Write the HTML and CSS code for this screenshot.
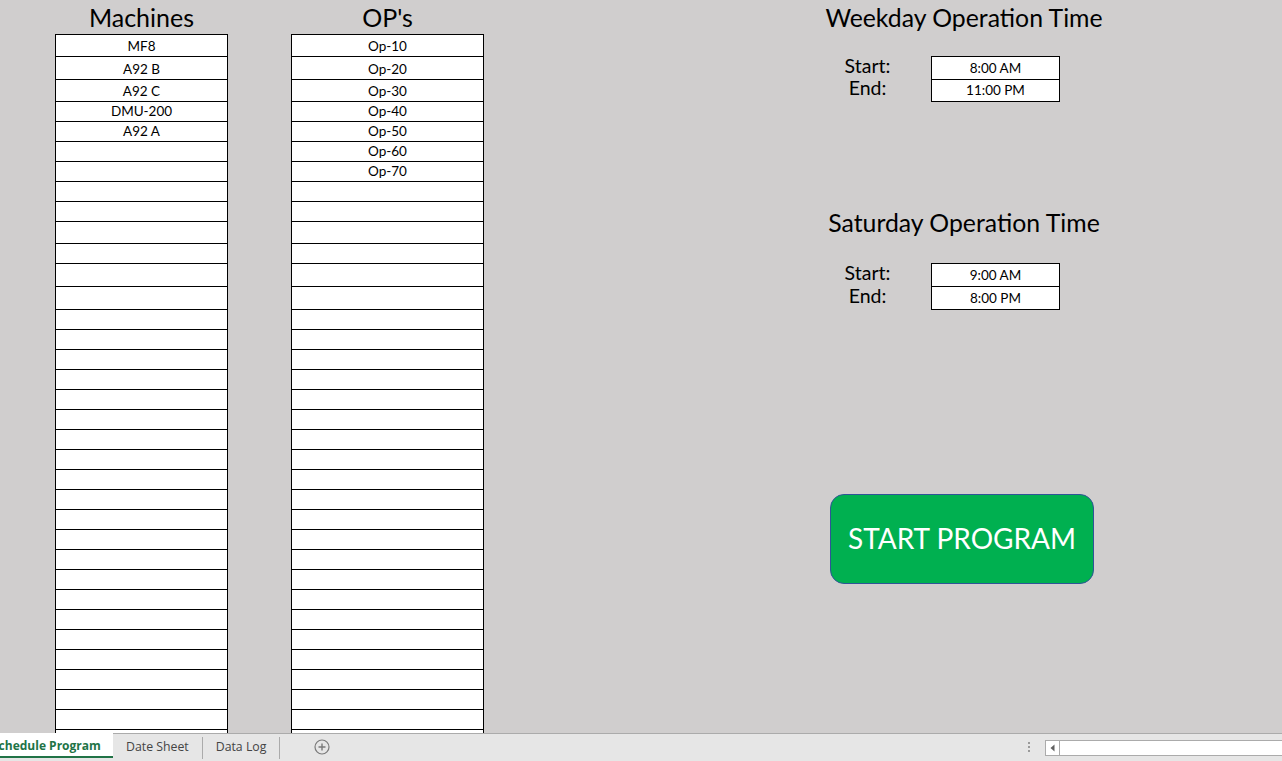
FILE: index.html
```html
<!DOCTYPE html>
<html>
<head>
<meta charset="utf-8">
<title>Schedule Program</title>
<link rel="stylesheet" href="styles.css">
</head>
<body>
<div class="app">
  <div class="sheet">
    <div class="col col-machines">
      <div class="col-title">Machines</div>
      <div class="list">
        <div class="row h22">MF8</div>
        <div class="row h23">A92 B</div>
        <div class="row h22">A92 C</div>
        <div class="row">DMU-200</div>
        <div class="row">A92 A</div>
        <div class="row"></div>
        <div class="row"></div>
        <div class="row"></div>
        <div class="row"></div>
        <div class="row h22"></div>
        <div class="row"></div>
        <div class="row h23"></div>
        <div class="row h23"></div>
        <div class="row"></div>
        <div class="row"></div>
        <div class="row"></div>
        <div class="row"></div>
        <div class="row"></div>
        <div class="row"></div>
        <div class="row"></div>
        <div class="row"></div>
        <div class="row"></div>
        <div class="row"></div>
        <div class="row"></div>
        <div class="row"></div>
        <div class="row"></div>
        <div class="row"></div>
        <div class="row"></div>
        <div class="row"></div>
        <div class="row"></div>
        <div class="row"></div>
        <div class="row"></div>
        <div class="row"></div>
        <div class="row"></div>
        <div class="row"></div>
        <div class="row"></div>
      </div>
    </div>
    <div class="col col-ops">
      <div class="col-title">OP's</div>
      <div class="list">
        <div class="row h22">Op-10</div>
        <div class="row h23">Op-20</div>
        <div class="row h22">Op-30</div>
        <div class="row">Op-40</div>
        <div class="row">Op-50</div>
        <div class="row">Op-60</div>
        <div class="row">Op-70</div>
        <div class="row"></div>
        <div class="row"></div>
        <div class="row h22"></div>
        <div class="row"></div>
        <div class="row h23"></div>
        <div class="row h23"></div>
        <div class="row"></div>
        <div class="row"></div>
        <div class="row"></div>
        <div class="row"></div>
        <div class="row"></div>
        <div class="row"></div>
        <div class="row"></div>
        <div class="row"></div>
        <div class="row"></div>
        <div class="row"></div>
        <div class="row"></div>
        <div class="row"></div>
        <div class="row"></div>
        <div class="row"></div>
        <div class="row"></div>
        <div class="row"></div>
        <div class="row"></div>
        <div class="row"></div>
        <div class="row"></div>
        <div class="row"></div>
        <div class="row"></div>
        <div class="row"></div>
        <div class="row"></div>
      </div>
    </div>
    <div class="panel">
      <div class="panel-title">Weekday Operation Time</div>
      <div class="times">
        <div class="labels">
          <div class="lab h23">Start:</div>
          <div class="lab h22">End:</div>
        </div>
        <div class="tbox">
          <div class="tcell h23">8:00 AM</div>
          <div class="tcell h22">11:00 PM</div>
        </div>
      </div>
      <div class="panel-title sat">Saturday Operation Time</div>
      <div class="times">
        <div class="labels">
          <div class="lab h23">Start:</div>
          <div class="lab h23">End:</div>
        </div>
        <div class="tbox">
          <div class="tcell h23">9:00 AM</div>
          <div class="tcell h23">8:00 PM</div>
        </div>
      </div>
      <button class="start-btn" type="button">START PROGRAM</button>
    </div>
  </div>
  <div class="tabbar">
    <div class="tabs">
      <div class="tab active"><span class="tab-text">Schedule Program</span></div>
      <div class="tab">Date Sheet</div>
      <div class="tab">Data Log</div>
      <div class="add-tab">
        <svg width="16" height="16" viewBox="0 0 16 16"><circle cx="8" cy="8" r="7" fill="none" stroke="#7a7a7a" stroke-width="1.2"/><path d="M8 4.5v7M4.5 8h7" stroke="#7a7a7a" stroke-width="1.4"/></svg>
      </div>
    </div>
    <div class="tabbar-right">
      <div class="grip"><span></span><span></span><span></span></div>
      <div class="hscroll">
        <div class="hs-arrow"><svg width="5" height="8" viewBox="0 0 5 8"><path d="M4.5 0.5v7L0.5 4z" fill="#606060"/></svg></div>
        <div class="hs-track"></div>
      </div>
    </div>
  </div>
</div>
</body>
</html>
```

FILE: styles.css
```css
* { box-sizing: border-box; }
html, body { margin: 0; padding: 0; }
body {
  width: 1282px;
  height: 761px;
  overflow: hidden;
  background: #D0CECE;
  font-family: Lato, "Liberation Sans", sans-serif;
  color: #000;
}
.app { display: flex; flex-direction: column; height: 761px; }
.sheet {
  height: 733px;
  overflow: hidden;
  display: flex;
  align-items: flex-start;
  padding-left: 55px;
}
.col { display: flex; flex-direction: column; flex: none; }
.col-machines { width: 173px; }
.col-ops { width: 193px; margin-left: 63px; }
.col-title {
  height: 34px;
  line-height: 34px;
  font-size: 25px;
  text-align: center;
  white-space: nowrap;
}
.list { border: 1px solid #000; border-bottom: none; background: #fff; }
.row {
  height: 20px;
  border-bottom: 1px solid #000;
  display: flex;
  align-items: flex-end;
  justify-content: center;
  font-size: 13.5px;
  line-height: 15px;
  padding-bottom: 2px;
  white-space: nowrap;
}
.h22 { height: 22px; }
.h23 { height: 23px; }

.panel {
  flex: none;
  width: 300px;
  margin-left: 330px;
  display: flex;
  flex-direction: column;
}
.panel-title {
  height: 34px;
  padding-top: 1px;
  line-height: 34px;
  font-size: 24.8px;
  text-align: center;
  white-space: nowrap;
}
.panel-title.sat { margin-top: 103px; }
.times { display: flex; margin-top: 22px; }
.panel-title.sat + .times { margin-top: 24px; }
.labels { width: 107px; padding-top: 1px; }
.lab {
  display: flex;
  align-items: flex-end;
  justify-content: center;
  font-size: 19.5px;
  line-height: 18px;
  padding-bottom: 5px;
}
.labels .lab.h22 { height: 22px; }
.tbox {
  width: 129px;
  margin-left: 10px;
  border: 1px solid #000;
  border-bottom: none;
  background: #fff;
}
.tcell {
  display: flex;
  align-items: flex-end;
  justify-content: center;
  border-bottom: 1px solid #000;
  font-size: 13.5px;
  line-height: 15px;
  padding-bottom: 3px;
  white-space: nowrap;
}
.start-btn {
  margin-top: 184px;
  margin-left: 16px;
  width: 264px;
  height: 90px;
  background: #00B050;
  border: 1px solid #2F5597;
  border-radius: 14px;
  color: #fff;
  font-family: Lato, "Liberation Sans", sans-serif;
  font-size: 28px;
  padding: 0 0 3px;
  cursor: pointer;
}

.tabbar {
  height: 28px;
  background: #E6E6E6;
  border-top: 1px solid #ABABAB;
  display: flex;
  justify-content: space-between;
  font-family: "Open Sans", "Noto Sans", sans-serif;
  font-size: 12.3px;
  color: #444;
}
.tabs { display: flex; align-items: flex-start; }
.tab {
  height: 22px;
  margin-top: 3px;
  padding: 0 13px;
  line-height: 20px;
  border-right: 1px solid #ABABAB;
  white-space: nowrap;
}
.tab.active {
  width: 113px;
  height: 25px;
  margin-top: -1px;
  padding: 3px 0 0;
  background: #fff;
  border-right: none;
  border-bottom: 2px solid #217346;
  overflow: hidden;
  line-height: 20px;
  font-size: 12px;
  color: #217346;
  font-weight: 700;
}
.tab-text { display: block; margin-left: -8px; }
.add-tab {
  margin-left: 34px;
  margin-top: 5px;
  width: 16px;
  height: 16px;
  display: flex;
}
.tabbar-right { display: flex; align-items: flex-start; }
.grip {
  display: flex;
  flex-direction: column;
  gap: 2px;
  margin-top: 8px;
  margin-right: 15px;
}
.grip span { width: 2px; height: 2px; background: #9a9a9a; display: block; }
.hscroll {
  margin-top: 6px;
  width: 237px;
  height: 16px;
  display: flex;
  border: 1px solid #ABABAB;
  border-right: none;
  background: #fff;
}
.hs-arrow {
  width: 14px;
  border-right: 1px solid #ABABAB;
  display: flex;
  align-items: center;
  justify-content: center;
}
.hs-track { flex: 1; }
```
